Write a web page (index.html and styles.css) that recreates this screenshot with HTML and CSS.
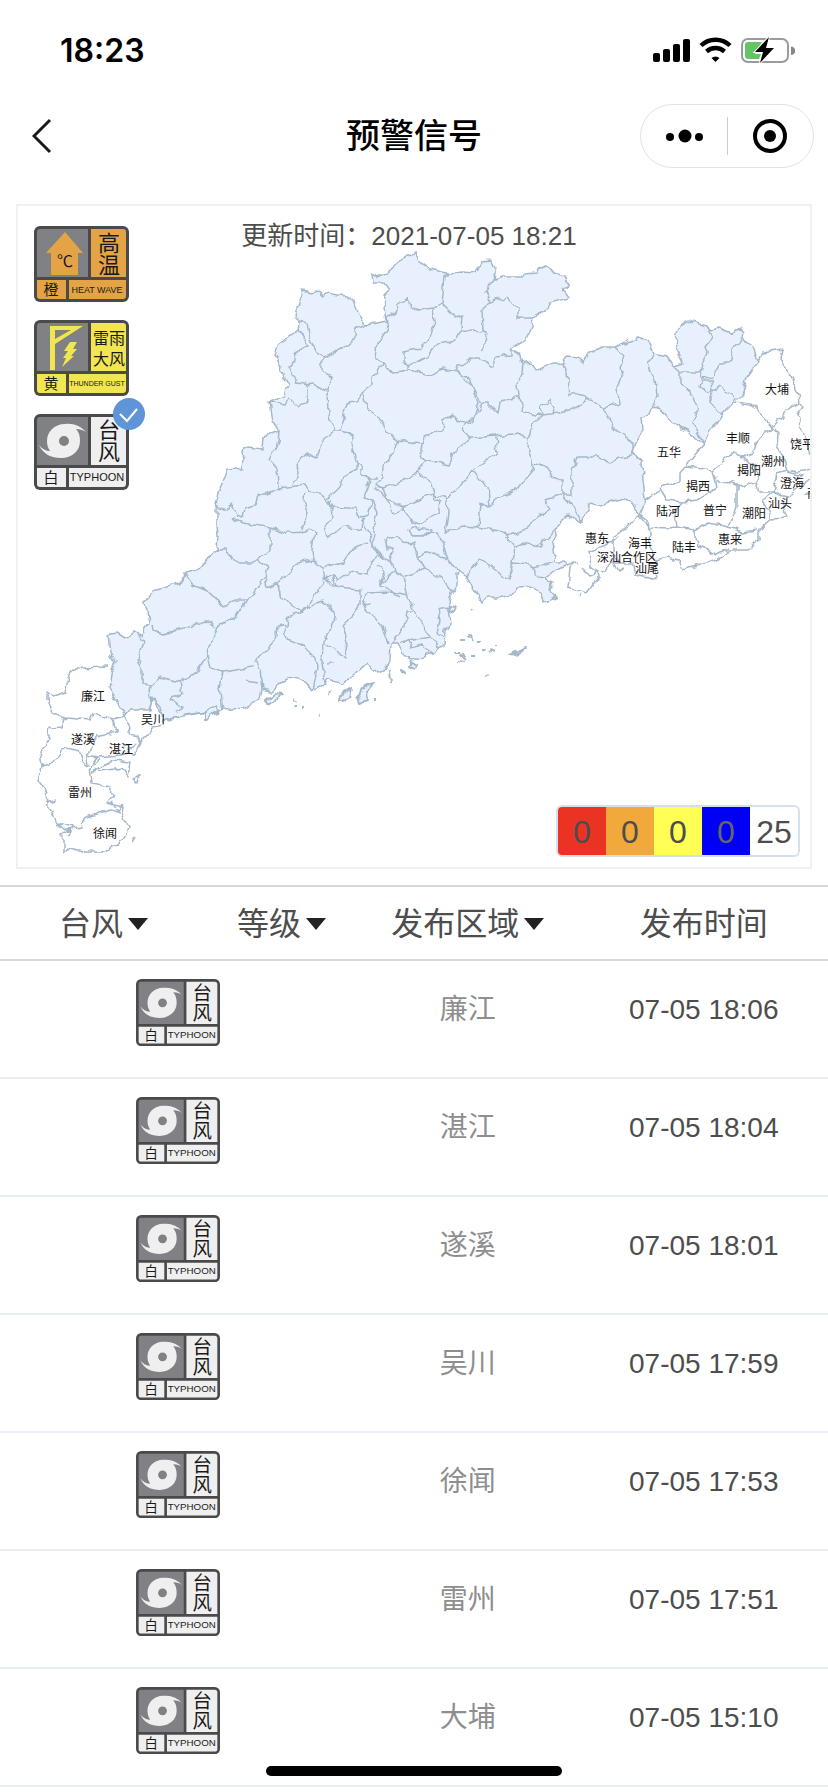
FILE: index.html
```html
<!DOCTYPE html>
<html lang="zh-CN">
<head>
    <meta charset="UTF-8">
    <meta name="viewport" content="width=device-width, initial-scale=1.0">
    <title>预警信号</title>
    <link rel="stylesheet" href="styles.css">
</head>
<body>
    <!-- warning sign symbols -->
    <svg class="symbols" width="0" height="0" aria-hidden="true">
        <symbol id="sign-heat" viewBox="0 0 95 76">
            <rect width="95" height="76" rx="6" fill="#4a4a4d"/>
            <path d="M6 3H54V51H3V6Q3 3 6 3Z" fill="#808184"/>
            <path d="M57 3H89Q92 3 92 6V51H57ZM3 54H32V73H6Q3 73 3 70ZM35 54H92V70Q92 73 89 73H35Z" fill="#e4a345"/>
            <path d="M31 6 49 27H44V49H17V27H12Z" fill="#e4a345"/>
            <text class="sign-unit" x="31" y="41">℃</text>
            <text class="sign-big" x="75" y="25">高</text>
            <text class="sign-big" x="75" y="47">温</text>
            <text class="sign-level" x="17" y="69">橙</text>
            <text class="sign-en" x="63" y="67">HEAT WAVE</text>
        </symbol>
        <symbol id="sign-thunder" viewBox="0 0 95 76">
            <rect width="95" height="76" rx="6" fill="#4a4a4d"/>
            <path d="M6 3H54V51H3V6Q3 3 6 3Z" fill="#808184"/>
            <path d="M57 3H89Q92 3 92 6V51H57ZM3 54H32V73H6Q3 73 3 70ZM35 54H92V70Q92 73 89 73H35Z" fill="#f1e552"/>
            <path d="M16 6H49L21 24V50H16ZM21 10V19L37 10Z" fill="#f1e552" fill-rule="evenodd"/>
            <path d="M36 22H43L39 29H43L37 36H40L28 47 32 38H29L34 31H30Z" fill="#f1e552"/>
            <text class="sign-mid" x="75" y="24">雷雨</text>
            <text class="sign-mid" x="75" y="45">大风</text>
            <text class="sign-level" x="17" y="69">黄</text>
            <text class="sign-en sign-en-small" x="63" y="66">THUNDER GUST</text>
        </symbol>
        <symbol id="sign-typhoon" viewBox="0 0 95 76">
            <rect width="95" height="76" rx="6" fill="#4a4a4d"/>
            <path d="M6 3H54V51H3V6Q3 3 6 3Z" fill="#808184"/>
            <path d="M57 3H89Q92 3 92 6V51H57ZM3 54H32V73H6Q3 73 3 70ZM35 54H92V70Q92 73 89 73H35Z" fill="#efefef"/>
            <path d="M53 19C47 12 39 9 31 10C20 10 13 18 13 27C13 31 14 34 16 37C12 37 8 35 5 31C9 40 17 44 27 44C38 44 46 37 46 27C46 22 45 18 42 15C46 15 50 16 53 19ZM30 22A5 5 0 1 1 30 32A5 5 0 1 1 30 22Z" fill="#efefef" fill-rule="evenodd"/>
            <text class="sign-big" x="75" y="24">台</text>
            <text class="sign-big" x="75" y="46">风</text>
            <text class="sign-level" x="17" y="69">白</text>
            <text class="sign-en sign-en-big" x="63" y="67">TYPHOON</text>
        </symbol>
    </svg>

    <div class="status-bar">
        <span class="status-time">18:23</span>
        <svg class="status-icons" width="142" height="26" viewBox="0 0 142 26" aria-hidden="true">
            <rect x="0" y="16" width="7" height="9" rx="2"/>
            <rect x="10" y="12" width="7" height="13" rx="2"/>
            <rect x="20" y="7" width="7" height="18" rx="2"/>
            <rect x="30" y="2" width="7" height="23" rx="2"/>
            <path d="M62.500 25 58.500 21A6 6 0 0 1 66.500 21Z"/>
            <path d="M48 8.500A21 21 0 0 1 77 8.500M53.500 14.500A13.500 13.500 0 0 1 71.500 14.500" fill="none" stroke="#000" stroke-width="4.400"/>
            <rect x="89" y="2" width="46" height="23" rx="6" fill="none" stroke="#9b9b9b" stroke-width="2"/>
            <path d="M95 5H109L102 17H108L106 22H95Q92 22 92 19V8Q92 5 95 5Z" fill="#65c466"/>
            <path d="M138 9.500A4 4 0 0 1 138 18Z" fill="#888"/>
            <path d="M116 0 102 15H110L107 26 121 11H113Z" stroke="#fff" stroke-width="2" paint-order="stroke"/>
        </svg>
    </div>

    <header class="nav-bar">
        <button class="nav-back" type="button" aria-label="返回">
            <svg width="20" height="36" viewBox="0 0 20 36"><path d="M18 2 2 18 18 34" fill="none" stroke="#1a1a1a" stroke-width="3"/></svg>
        </button>
        <h1>预警信号</h1>
        <div class="capsule">
            <button type="button" aria-label="更多">
                <svg width="40" height="16" viewBox="0 0 40 16"><circle cx="6" cy="9" r="4"/><circle cx="21" cy="8" r="6.500"/><circle cx="35" cy="9" r="4"/></svg>
            </button>
            <button type="button" aria-label="关闭">
                <svg width="36" height="36" viewBox="0 0 36 36"><circle cx="18" cy="18" r="15" fill="none" stroke="#000" stroke-width="4"/><circle cx="18" cy="18" r="6"/></svg>
            </button>
        </div>
    </header>

    <main>
        <section class="map-card">
            <svg class="map" viewBox="18 206 792 661" role="img" aria-label="广东省预警地图">
                <defs>
                    <!-- gives the borders their ragged edge -->
                    <filter id="ragged" filterUnits="userSpaceOnUse" x="18" y="206" width="792" height="661" color-interpolation-filters="sRGB">
                        <feTurbulence type="fractalNoise" baseFrequency="0.13" numOctaves="1" seed="4"/>
                        <feDisplacementMap in="SourceGraphic" scale="8" xChannelSelector="R" yChannelSelector="G"/>
                    </filter>
                </defs>
                <g filter="url(#ragged)">
                    <path class="land" d="M108 635 117 633 125 638 135 633 142 635 143 630 149 622 145 602 153 590 183 582 185 573 198 570 217 548 218 537 217 523 217 508 215 505 220 488 228 470 242 468 243 460 242 450 248 447 262 449 263 437 279 431 272 420 269 402 283 397 288 385 281 372 282 365 275 355 278 345 287 338 298 330 299 322 294 317 298 307 303 291 312 293 320 291 324 296 328 292 332 295 347 297 353 300 358 312 363 322 364 325 377 323 386 321 384 308 387 303 384 295 389 290 384 283 373 283 372 273 377 277 388 272 398 263 403 257 410 254 417 253 420 262 430 269 447 273 463 272 475 273 480 262 491 261 496 273 494 280 503 277 522 277 525 274 537 273 538 268 548 265 554 273 565 276 569 285 563 290 568 298 550 303 547 310 533 317 532 327 526 340 510 349 521 355 523 363 532 362 536 371 547 365 563 363 567 357 577 358 583 362 587 353 602 347 615 347 638 337 650 343 654 354 667 357 673 366 683 363 677 350 676 337 680 325 688 321 707 326 710 331 718 328 732 333 740 328 744 332 743 340 753 347 758 360 747 377 743 393 733 403 722 415 710 430 703 445 690 433 678 426 667 417 658 407 652 408 650 416 642 417 643 430 635 445 633 454 642 462 643 480 645 500 639 515 632 502 620 499 600 505 589 503 582 523 568 515 558 525 555 540 553 550 555 562 563 562 567 565 553 572 545 578 553 582 548 590 557 597 544 604 542 593 533 587 518 588 515 593 497 597 488 597 480 603 476 592 467 577 460 572 457 573 457 585 450 598 448 608 450 623 445 630 444 646 438 648 432 652 423 657 412 660 405 657 398 643 391 643 390 660 385 670 378 673 367 663 352 677 343 683 328 680 325 685 313 689 303 680 293 678 277 685 270 692 262 690 260 698 245 708 223 710 207 718 205 712 173 718 163 723 162 710 152 697 150 710 130 710 125 717 115 700 110 687 113 670 115 662 110 653Z"/>
                    <!-- north -->
                    <path d="M299 322 307 324 311 340 316 350 322 357 343 349 355 338 355 330 363 325M322 357V373L332 377 327 390 328 413 335 430M298 330 308 346 295 353 293 365 288 366 297 383 308 385 313 384 326 391M269 402 285 405 289 398 298 407 308 400V388M279 431 278 443 270 460 278 470 279 488M279 488 258 497 255 505 245 508 243 517 237 515 232 505 225 510 215 505M293 485 298 473 297 463 306 453 317 458 322 440 335 431H341M279 488 305 485 310 492 323 495 327 500 340 487 343 477 357 470V463L352 447 353 437 341 431M327 500 332 507 347 508 357 508 360 517 368 515 372 500 363 498 370 480 362 475V467L357 463M340 430 347 403 357 402 362 393 373 385V377L383 363 375 357 377 343 382 337 388 328 386 318 395 313 397 305 407 298 410 307 420 310 433 308 442 303 445 277 447 273M433 308 435 320 428 340 420 348 403 352V360L408 365V372M383 363 393 373 402 372 410 370 430 375 443 369 457 372 473 387 478 403 473 420 467 425M408 367 427 357 437 343 457 340 462 330 483 332M442 303 457 318 462 316 461 328M362 393 368 410 383 422 387 433 398 440 422 444 424 438 442 430 443 420 452 415 466 424 463 430 470 438 453 453 450 465 420 458 422 444M398 440 393 453 383 467 382 477 375 483 383 488 407 480 417 473 427 460M362 475 370 478H377M383 488 387 500 403 507 425 497 435 495 432 483 417 473"/>
                    <path d="M433 495 447 498 463 483 472 470 497 453 496 436 470 438M472 470 488 488 490 507 480 503 478 527M447 498 448 513 445 532 463 526 478 527 503 532 507 537 523 530 540 515 550 512 545 500 563 495 572 495V480L572 470 577 457 597 457 610 463 620 457 635 454M563 495 573 507 582 523M490 507 497 497 518 489 532 470 533 463 527 447 528 440 518 433 496 436M528 440 532 425 542 415M533 463 547 467 552 477 563 482V495M465 425 477 413 482 403 488 403 498 413 500 402 518 397 525 412 542 415 560 413 577 407 588 398M482 403 475 390 468 377 455 373 457 365 467 364 470 357H480L493 367 497 357 510 355V349M518 397 517 383 522 373 523 363M563 363 567 373 570 395 580 393 588 398 603 408 618 403 617 387 622 377 620 367 624 357 615 347M603 408 615 430 633 443V454M496 275 485 293 490 302 507 297 518 308V317H533M490 302 482 310 483 330 488 335 480 353M542 415 540 407 550 400 554 407 552 413"/>
                    <!-- east -->
                    <path d="M673 366 680 373H700L702 363 707 353 705 347 712 338 708 331M680 373V383L692 395 698 410 693 423 703 445M654 354 648 363 650 370 655 380 657 397 652 408M700 373 702 378 713 377 720 363H730L733 350 742 338M702 380H712L713 390 707 393 700 387ZM713 390 720 387 735 397M713 391 710 403 722 415"/>
                    <path d="M758 360 763 353 783 350 780 360 790 373 797 390 799 402 787 410 773 427 752 405 733 403M799 402 804 407 798 415 802 430 812 457M773 427 778 433 777 447 785 460 788 470 797 472 812 470M703 445 685 467 713 470 733 453 743 457 753 453 757 440 773 428M685 467 680 473V482L663 485 660 490 645 500M660 488 667 500 682 502 697 500 717 488 713 470M717 482 733 483 743 487 757 482 758 467 740 457M757 482 760 492H773L777 473 788 470M737 483V507L728 527M639 515 650 527 667 528 677 527 675 513 682 502M677 527 695 530 708 523 728 527 742 532 758 530M695 530 697 545 717 555 730 548M787 517 770 518 760 530V540L747 550H730L717 560 682 570 678 560 667 557 655 560 657 580 635 575 633 563 613 563 602 572M773 492 763 500 770 513V518M773 492 787 497 800 487 812 478M787 517 782 500M639 515 627 527 613 537V553L620 563M639 515 648 520 650 547 655 560M788 472 803 476 796 480M803 493H812"/>
                    <path d="M620 535 613 542 588 552 590 567 600 575 587 593 568 588 570 567 575 562 567 565M582 568 590 576 600 572M580 594 578 598M613 563 618 571 625 568M575 562 577 566"/>
                    <!-- west -->
                    <path d="M185 574 193 585 212 593 223 607 233 600 248 600 265 578 268 568 257 562H233L225 548H217M257 562 270 550V528L243 523 233 517M270 528 287 533 305 532 310 528 315 532 312 548 313 560M303 530 307 512 303 500 304 492M265 578 267 588 277 583 290 572 297 563 313 560 323 567M277 583 282 597 300 612 307 608 312 597 325 583 323 567 343 562 353 548 368 542M330 500 332 515 325 528 328 537 343 527 362 530 363 518 377 553 393 565M325 577 338 588 360 590V605L353 615 343 625 347 643 345 657 330 647 323 642M333 573 338 580 350 572 368 575 370 563 377 555M327 577 333 574 336 586H330ZM300 613 317 602 323 600 335 612 332 627 323 642 322 663 325 685M300 613 288 617 287 625 277 627 275 640 255 662 260 670 262 690M285 627 287 640 302 645 315 658 318 667 313 689M248 600 240 612 217 627 208 622 163 633 153 630 152 623M217 627 207 655 210 668 223 672 253 667M207 655 197 672 187 677 180 682 160 677 152 687 142 682V667L138 660 143 640 138 635M223 672 220 687 223 710M180 682 182 693 170 700 183 707 177 712M152 687 150 697M163 723 185 715 207 712M325 663 334 662M247 681 258 683"/>
                    <!-- pearl river delta -->
                    <path d="M367 593 363 605 383 627 388 643M367 593 393 592 400 597M372 500 377 513 373 530 375 550 390 563M375 487 385 497 393 513 403 508 412 522 420 525 438 513 440 503 435 497M412 527 432 530 430 535H413L408 530ZM413 535 438 533 443 543 447 558 460 572M385 540 387 548H393L390 560 395 570 403 577 425 568 417 555 413 543 402 542 398 536 385 540M418 555 433 552 447 560M425 568 443 580 453 592M403 577 407 597 420 620 438 648M395 570 387 577 380 587 395 592 407 595M413 610H407L405 627 391 643M400 643 413 640 430 637M408 640 412 648 422 645 432 652M505 535 515 547 513 563 508 580 480 558 467 577M515 548 528 542 540 547 557 527M513 563 528 565 533 568 555 562M534 568 537 577 545 578M448 608 438 610 440 620 437 633 443 637M377 566 385 572 380 587M363 605 369 604"/>
                    <!-- islands -->
                    <path class="island" d="M510 655 518 653 526 648 519 650ZM460 640H464M468 637 472 636 474 642M478 642H481M454 652H460M460 654 466 660M471 655H475M458 661 465 662M483 650H486M490 650 494 652M494 644H497M486 676 490 674M470 609 473 611M450 606 456 607 453 613 448 611ZM410 662 417 664 414 669 408 667ZM401 671 407 672 402 674ZM389 671 390 682M338 702 344 692 352 688 350 697 342 702ZM357 695 366 685 373 682 367 690 368 700 360 703ZM373 700H376M329 693 330 691M265 702 274 694 284 695 276 700 267 704ZM293 698 297 701M293 707H296M302 706H304M319 716 320 717M205 712 217 705 219 711 205 720Z"/>
                    <!-- leizhou peninsula -->
                    <path d="M108 667 82 668 70 670 65 692 52 696 47 692V700L52 713 65 718 90 720 93 713 113 720 125 717M65 718 62 727 49 728 47 745 40 753 42 767 52 763 60 753 65 748 78 750 82 762 88 767M113 720 117 732 97 737 93 747 87 755 88 767M97 757 120 755 128 753M125 717 130 727 128 735 138 737 140 743 153 727 163 725M140 743 133 757 129 752 136 742M149 710 153 697 157 707 163 714M93 772 113 760 130 762 128 777 122 768ZM132 780 139 775 137 783ZM42 767 38 780 47 793 48 807 57 823 65 830 82 827 83 818 110 810 120 813M90 767 92 783 110 787 113 797 107 803 123 807 122 813 128 827 123 840 113 847 102 852H85L70 848 65 853V840L60 835 70 830M112 802 118 812 122 804M46 803 57 800M58 823 72 827 68 836M88 755 97 757 90 766M134 838 131 843M93 765 99 759M123 746 132 748"/>
                </g>
                <g class="labels">
                    <text x="777" y="394">大埔</text>
                    <text x="738" y="443">丰顺</text>
                    <text x="802" y="449">饶平</text>
                    <text x="669" y="457">五华</text>
                    <text x="773" y="466">潮州</text>
                    <text x="749" y="475">揭阳</text>
                    <text x="792" y="488">澄海</text>
                    <text x="698" y="491">揭西</text>
                    <text x="819" y="498">南澳</text>
                    <text x="780" y="508">汕头</text>
                    <text x="715" y="515">普宁</text>
                    <text x="668" y="516">陆河</text>
                    <text x="754" y="518">潮阳</text>
                    <text x="597" y="543">惠东</text>
                    <text x="730" y="544">惠来</text>
                    <text x="640" y="548">海丰</text>
                    <text x="684" y="552">陆丰</text>
                    <text x="627" y="562">深汕合作区</text>
                    <text x="647" y="573">汕尾</text>
                    <text x="93" y="701">廉江</text>
                    <text x="153" y="724">吴川</text>
                    <text x="83" y="744">遂溪</text>
                    <text x="121" y="754">湛江</text>
                    <text x="80" y="797">雷州</text>
                    <text x="105" y="838">徐闻</text>
                </g>
            </svg>

            <p class="update-time">更新时间：2021-07-05 18:21</p>

            <div class="signs">
                <button type="button" aria-label="高温橙色预警"><svg viewBox="0 0 95 76"><use href="#sign-heat"/></svg></button>
                <button type="button" aria-label="雷雨大风黄色预警"><svg viewBox="0 0 95 76"><use href="#sign-thunder"/></svg></button>
                <button type="button" aria-label="台风白色预警" aria-pressed="true">
                    <svg viewBox="0 0 95 76"><use href="#sign-typhoon"/></svg>
                    <svg class="check" viewBox="0 0 32 32"><circle cx="16" cy="16" r="16" fill="#5f94d9"/><path d="M7 16 14 23 24 11" fill="none" stroke="#fff" stroke-width="2"/></svg>
                </button>
            </div>

            <ul class="counts">
                <li class="red">0</li>
                <li class="orange">0</li>
                <li class="yellow">0</li>
                <li class="blue">0</li>
                <li>25</li>
            </ul>
        </section>

        <table class="warnings">
            <colgroup>
                <col class="col-type">
                <col class="col-level">
                <col class="col-area">
                <col class="col-time">
            </colgroup>
            <thead>
                <tr>
                    <th><button type="button">台风<i class="arrow"></i></button></th>
                    <th><button type="button">等级<i class="arrow"></i></button></th>
                    <th><button type="button">发布区域<i class="arrow"></i></button></th>
                    <th>发布时间</th>
                </tr>
            </thead>
            <tbody>
                <tr><td colspan="2"><svg class="row-sign" viewBox="0 0 95 76"><use href="#sign-typhoon"/></svg></td><td class="area">廉江</td><td>07-05 18:06</td></tr>
                <tr><td colspan="2"><svg class="row-sign" viewBox="0 0 95 76"><use href="#sign-typhoon"/></svg></td><td class="area">湛江</td><td>07-05 18:04</td></tr>
                <tr><td colspan="2"><svg class="row-sign" viewBox="0 0 95 76"><use href="#sign-typhoon"/></svg></td><td class="area">遂溪</td><td>07-05 18:01</td></tr>
                <tr><td colspan="2"><svg class="row-sign" viewBox="0 0 95 76"><use href="#sign-typhoon"/></svg></td><td class="area">吴川</td><td>07-05 17:59</td></tr>
                <tr><td colspan="2"><svg class="row-sign" viewBox="0 0 95 76"><use href="#sign-typhoon"/></svg></td><td class="area">徐闻</td><td>07-05 17:53</td></tr>
                <tr><td colspan="2"><svg class="row-sign" viewBox="0 0 95 76"><use href="#sign-typhoon"/></svg></td><td class="area">雷州</td><td>07-05 17:51</td></tr>
                <tr><td colspan="2"><svg class="row-sign" viewBox="0 0 95 76"><use href="#sign-typhoon"/></svg></td><td class="area">大埔</td><td>07-05 15:10</td></tr>
            </tbody>
        </table>
    </main>

    <div class="home-indicator"></div>
</body>
</html>
```
FILE: styles.css
```css
* {
    margin: 0;
    padding: 0;
    box-sizing: border-box;
}

body {
    background: #fff;
    color: #4d4d4d;
    font-family: "Liberation Sans", "Noto Sans CJK SC", sans-serif;
    min-height: 100vh;
}

button {
    background: none;
    border: none;
    color: inherit;
    font: inherit;
    cursor: pointer;
}

.symbols {
    position: absolute;
}

/* status bar */
.status-bar {
    display: flex;
    justify-content: space-between;
    align-items: center;
    height: 100px;
    padding: 0 33px 0 60px;
}

.status-time {
    color: #000;
    font-family: Inter, sans-serif;
    font-size: 32px;
    font-weight: 600;
}

/* nav bar */
.nav-bar {
    display: grid;
    grid-template-columns: 1fr auto 1fr;
    align-items: center;
    height: 72px;
    padding: 0 14px 0 32px;
    margin-bottom: 32px;
}

.nav-back {
    justify-self: start;
    display: flex;
}

.nav-bar h1 {
    color: #000;
    font-size: 34px;
    font-weight: 500;
    line-height: 48px;
    margin-right: 18px;
}

.capsule {
    justify-self: end;
    display: flex;
    align-items: center;
    width: 174px;
    height: 64px;
    border: 1px solid #e3e3e3;
    border-radius: 32px;
}

.capsule button {
    flex: 1;
    display: flex;
    justify-content: center;
    align-items: center;
    height: 38px;
}

.capsule button + button {
    border-left: 1px solid #ccc;
}

/* map */
.map-card {
    position: relative;
    margin: 0 16px 16px;
    border: 2px solid #eef2f3;
}

.map {
    display: block;
    width: 100%;
}

.map path {
    fill: none;
    stroke: #a5b8ca;
    stroke-width: 1.5;
    stroke-linejoin: round;
}

.map .land {
    fill: #e8f0fe;
}

.map .island {
    fill: #e8f0fe;
    stroke-width: 2;
}

.labels {
    fill: #111;
    font-size: 12px;
    text-anchor: middle;
}

.update-time {
    position: absolute;
    top: 12px;
    left: 0;
    right: 10px;
    font-size: 26px;
    line-height: 36px;
    text-align: center;
}

.signs {
    position: absolute;
    top: 20px;
    left: 16px;
    display: grid;
    gap: 18px;
}

.signs button {
    position: relative;
    width: 95px;
    height: 76px;
}

.signs svg {
    display: block;
    width: 100%;
}

.signs .check {
    position: absolute;
    top: -16px;
    right: -16px;
    width: 32px;
}

symbol text {
    fill: #1a1a1a;
    text-anchor: middle;
    font-family: "Liberation Sans", "Noto Sans CJK SC", sans-serif;
}

.sign-unit {
    font-size: 16px;
}

.sign-big {
    font-size: 22px;
}

.sign-mid {
    font-size: 16px;
}

.sign-level {
    font-size: 15px;
}

.sign-en {
    font-size: 9px;
}

.sign-en-small {
    font-size: 7px;
}

.sign-en-big {
    font-size: 11px;
}

.counts {
    position: absolute;
    right: 10px;
    bottom: 10px;
    display: flex;
    list-style: none;
    border: 2px solid #d5e0ef;
    border-radius: 6px;
    background: #fff;
    overflow: hidden;
}

.counts li {
    width: 48px;
    font-size: 32px;
    line-height: 50px;
    height: 48px;
    text-align: center;
}

.counts .red {
    background: #ea3323;
}

.counts .orange {
    background: #f2a93b;
}

.counts .yellow {
    background: #ffff54;
}

.counts .blue {
    background: #0000f5;
    color: #666;
}

/* warning list */
.warnings {
    width: 100%;
    table-layout: fixed;
    border-collapse: separate;
    border-spacing: 0;
    text-align: center;
}

.col-type {
    width: 25%;
}

.col-level {
    width: 18%;
}

.col-area {
    width: 27%;
}

.col-time {
    width: 30%;
}

.warnings th {
    height: 76px;
    padding-top: 2px;
    border-top: 2px solid #d8d8d8;
    border-bottom: 2px solid #d8d8d8;
    font-size: 32px;
    font-weight: 400;
    line-height: 48px;
}

.warnings th button {
    display: inline-flex;
    align-items: center;
    gap: 5px;
    vertical-align: top;
}

.arrow {
    border: 10px solid transparent;
    border-top: 12px solid #222;
    border-bottom: 0;
}

.warnings td {
    height: 118px;
    border-bottom: 2px solid #e9eef6;
    font-size: 28px;
    line-height: 98px;
    vertical-align: top;
}

.warnings .area {
    color: #8e8e8e;
}

.row-sign {
    display: block;
    width: 84px;
    margin: 18px auto 0;
}

.home-indicator {
    position: fixed;
    left: 50%;
    bottom: 16px;
    width: 296px;
    height: 10px;
    margin-left: -148px;
    border-radius: 5px;
    background: #000;
}
```
